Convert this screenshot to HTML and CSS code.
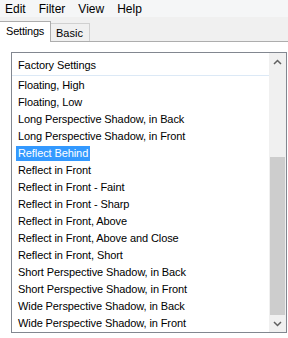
FILE: index.html
```html
<!DOCTYPE html>
<html lang="en">
<head>
<meta charset="UTF-8">
<title>Settings</title>
<link rel="stylesheet" href="styles.css">
</head>
<body>
    <div class="menubar">
        <span class="menu-item">Edit</span>
        <span class="menu-item">Filter</span>
        <span class="menu-item">View</span>
        <span class="menu-item">Help</span>
    </div>
    <div class="tabstrip">
        <div class="tab active">Settings</div>
        <div class="tab">Basic</div>
    </div>
    <div class="page">
        <div class="listbox">
            <div class="list">
                <div class="list-header">Factory Settings</div>
                <div class="row"><span>Floating, High</span></div>
                <div class="row"><span>Floating, Low</span></div>
                <div class="row"><span>Long Perspective Shadow, in Back</span></div>
                <div class="row"><span>Long Perspective Shadow, in Front</span></div>
                <div class="row selected"><span>Reflect Behind</span></div>
                <div class="row"><span>Reflect in Front</span></div>
                <div class="row"><span>Reflect in Front - Faint</span></div>
                <div class="row"><span>Reflect in Front - Sharp</span></div>
                <div class="row"><span>Reflect in Front, Above</span></div>
                <div class="row"><span>Reflect in Front, Above and Close</span></div>
                <div class="row"><span>Reflect in Front, Short</span></div>
                <div class="row"><span>Short Perspective Shadow, in Back</span></div>
                <div class="row"><span>Short Perspective Shadow, in Front</span></div>
                <div class="row"><span>Wide Perspective Shadow, in Back</span></div>
                <div class="row"><span>Wide Perspective Shadow, in Front</span></div>
            </div>
            <div class="scrollbar">
                <div class="arrow">
                    <svg width="9" height="6" viewBox="0 0 9 6"><path d="M1 5 L4.5 1.5 L8 5" fill="none" stroke="#606060" stroke-width="1.5"/></svg>
                </div>
                <div class="track">
                    <div class="thumb"></div>
                </div>
                <div class="arrow">
                    <svg width="9" height="6" viewBox="0 0 9 6"><path d="M1 1 L4.5 4.5 L8 1" fill="none" stroke="#606060" stroke-width="1.5"/></svg>
                </div>
            </div>
        </div>
    </div>
</body>
</html>
```

FILE: styles.css
```css
body {
    margin: 0;
    width: 288px;
    height: 338px;
    overflow: hidden;
    background: #ffffff;
    font-family: "Liberation Sans", Arial, sans-serif;
    color: #000000;
}
.menubar {
    height: 17px;
    display: flex;
    align-items: center;
    padding-left: 5px;
    background: #f5f6f7;
    font-size: 12px;
}
.menu-item {
    margin-right: 13px;
}
.tabstrip {
    height: 24px;
    display: flex;
    align-items: flex-end;
    background: #f0f0f0;
    border-bottom: 1px solid #adadad;
    font-size: 11px;
}
.tab {
    width: 33px;
    height: 17px;
    padding-left: 5px;
    border: 1px solid #d0d0d0;
    border-bottom: none;
    border-left: none;
    background: #f0f0f0;
    line-height: 18px;
}
.tab.active {
    width: 44px;
    height: 20px;
    margin-bottom: -1px;
    padding-left: 6px;
    background: #ffffff;
    border-color: #adadad;
    letter-spacing: -0.2px;
    line-height: 18px;
}
.page {
    padding: 10px 1px 0 11px;
}
.listbox {
    height: 279px;
    display: flex;
    border: 1px solid #828790;
}
.list {
    flex: 1;
    font-size: 11px;
    letter-spacing: -0.1px;
}
.list-header {
    height: 22px;
    line-height: 24px;
    padding-left: 6px;
    border-bottom: 1px solid #dce9f6;
    margin-bottom: 1px;
}
.row {
    height: 17px;
    display: flex;
    align-items: center;
    padding-left: 4px;
}
.row span {
    padding: 0 2px;
    line-height: 15px;
}
.row.selected span {
    background: #3399ff;
    color: #ffffff;
}
.scrollbar {
    width: 17px;
    display: flex;
    flex-direction: column;
    background: #f0f0f0;
}
.arrow {
    height: 17px;
    display: flex;
    align-items: center;
    justify-content: center;
}
.track {
    flex: 1;
    padding-top: 87px;
    padding-left: 1px;
}
.thumb {
    height: 158px;
    width: 15px;
    background: #cdcdcd;
}
```
